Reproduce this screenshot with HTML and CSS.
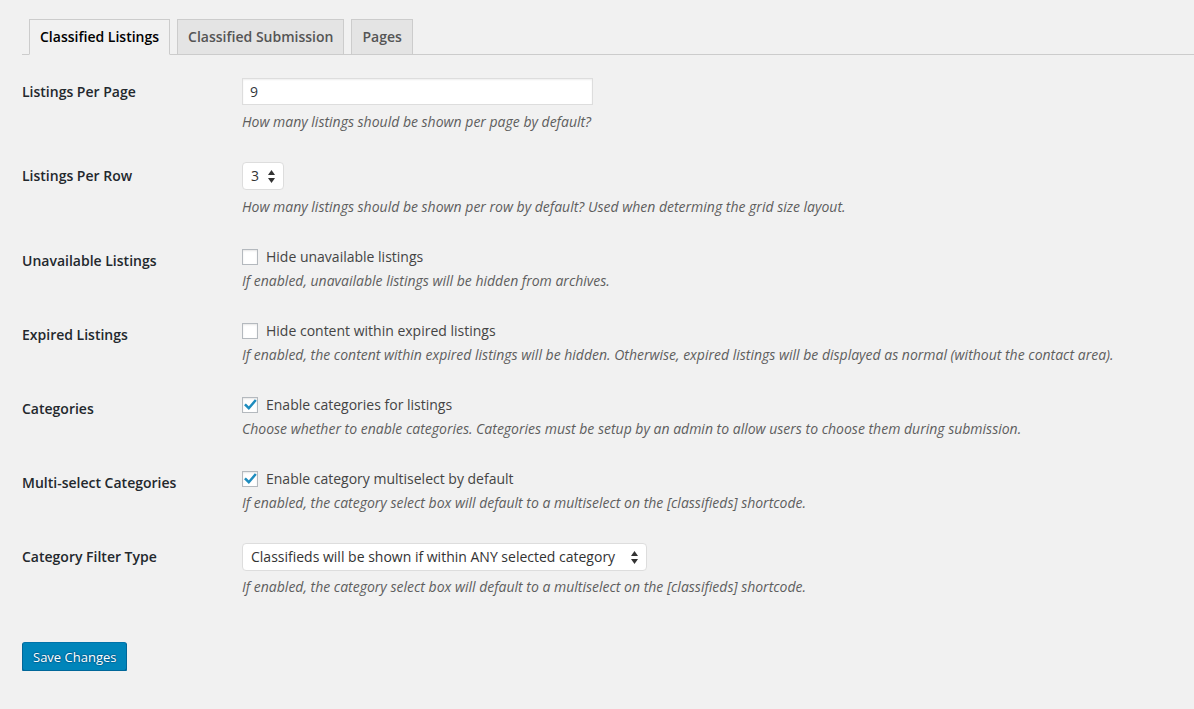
FILE: index.html
```html
<!DOCTYPE html>
<html>
<head>
<meta charset="utf-8">
<link rel="stylesheet" href="styles.css">
</head>
<body>
<div class="wrap">
  <nav class="nav-tab-wrapper">
    <a class="nav-tab nav-tab-active">Classified Listings</a>
    <a class="nav-tab">Classified Submission</a>
    <a class="nav-tab">Pages</a>
  </nav>
  <table class="form-table">
    <tbody>
      <tr>
        <th>Listings Per Page</th>
        <td>
          <div class="text-input">9</div>
          <p class="description">How many listings should be shown per page by default?</p>
        </td>
      </tr>
      <tr>
        <th>Listings Per Row</th>
        <td>
          <div class="select select-small"><span>3</span><svg class="arrows" width="7" height="13" viewBox="0 0 7 13"><polygon points="0,5 3.5,0 7,5" fill="#333"/><polygon points="0,8 3.5,13 7,8" fill="#333"/></svg></div>
          <p class="description">How many listings should be shown per row by default? Used when determing the grid size layout.</p>
        </td>
      </tr>
      <tr>
        <th>Unavailable Listings</th>
        <td>
          <div class="check-line"><span class="checkbox"></span><span>Hide unavailable listings</span></div>
          <p class="description">If enabled, unavailable listings will be hidden from archives.</p>
        </td>
      </tr>
      <tr>
        <th>Expired Listings</th>
        <td>
          <div class="check-line"><span class="checkbox"></span><span>Hide content within expired listings</span></div>
          <p class="description">If enabled, the content within expired listings will be hidden. Otherwise, expired listings will be displayed as normal (without the contact area).</p>
        </td>
      </tr>
      <tr>
        <th>Categories</th>
        <td>
          <div class="check-line"><span class="checkbox"><svg width="14" height="14" viewBox="0 0 14 14"><path d="M2.8 7.2 L5.8 10.2 L12 2.9" fill="none" stroke="#1e8cbe" stroke-width="2.5" stroke-linecap="square"/></svg></span><span>Enable categories for listings</span></div>
          <p class="description">Choose whether to enable categories. Categories must be setup by an admin to allow users to choose them during submission.</p>
        </td>
      </tr>
      <tr>
        <th>Multi-select Categories</th>
        <td>
          <div class="check-line"><span class="checkbox"><svg width="14" height="14" viewBox="0 0 14 14"><path d="M2.8 7.2 L5.8 10.2 L12 2.9" fill="none" stroke="#1e8cbe" stroke-width="2.5" stroke-linecap="square"/></svg></span><span>Enable category multiselect by default</span></div>
          <p class="description">If enabled, the category select box will default to a multiselect on the [classifieds] shortcode.</p>
        </td>
      </tr>
      <tr>
        <th>Category Filter Type</th>
        <td>
          <div class="select select-wide"><span>Classifieds will be shown if within ANY selected category</span><svg class="arrows" width="7" height="13" viewBox="0 0 7 13"><polygon points="0,5 3.5,0 7,5" fill="#333"/><polygon points="0,8 3.5,13 7,8" fill="#333"/></svg></div>
          <p class="description">If enabled, the category select box will default to a multiselect on the [classifieds] shortcode.</p>
        </td>
      </tr>
    </tbody>
  </table>
  <p class="submit"><button class="button-primary">Save Changes</button></p>
</div>
</body>
</html>
```

FILE: styles.css
```css
html, body {
  margin: 0;
  padding: 0;
  background: #f1f1f1;
}
body {
  font-family: "Open Sans", "Liberation Sans", sans-serif;
  font-size: 13px;
  color: #444;
}
.wrap {
  margin-left: 22px;
}
.nav-tab-wrapper {
  display: flex;
  align-items: flex-end;
  padding-top: 19px;
  border-bottom: 1px solid #ccc;
}
.nav-tab {
  display: block;
  margin-left: 7px;
  margin-bottom: -1px;
  padding: 5px 10px;
  font-size: 14px;
  line-height: 24px;
  font-weight: 600;
  color: #555;
  background: #e4e4e4;
  border: 1px solid #ccc;
  white-space: nowrap;
}
.nav-tab-active {
  color: #000;
  background: #f1f1f1;
  border-bottom-color: #f1f1f1;
}
.form-table {
  margin-top: 8px;
  border-collapse: collapse;
  width: 100%;
}
.form-table th {
  width: 200px;
  padding: 20px 10px 20px 0;
  text-align: left;
  vertical-align: top;
  font-size: 14px;
  line-height: 1.3;
  font-weight: 600;
  color: #23282d;
}
.form-table td {
  padding: 15px 10px;
  vertical-align: top;
  font-size: 14px;
  line-height: 1.3;
}
.description {
  margin: 3px 0 0;
  font-size: 14px;
  line-height: 21px;
  font-style: italic;
  color: #5e5e5e;
}
.text-input {
  box-sizing: border-box;
  margin: 0 1px 6px 0;
  width: 351px;
  height: 27px;
  padding: 0 7px;
  line-height: 25px;
  background: #fff;
  border: 1px solid #ddd;
  box-shadow: inset 0 1px 2px rgba(0,0,0,.07);
  color: #32373c;
  font-size: 14px;
}
.select {
  box-sizing: border-box;
  position: relative;
  display: flex;
  align-items: center;
  margin: 0 0 5px;
  height: 28px;
  padding: 0 8px;
  background: #fff;
  border: 1px solid #ddd;
  border-radius: 4px;
  color: #333;
  font-size: 14px;
}
.select-small {
  width: 42px;
  margin-bottom: 6px;
}
.select-wide {
  width: 405px;
}
.select .arrows {
  position: absolute;
  right: 8px;
  top: 7px;
}
.check-line {
  display: flex;
  align-items: center;
  height: 20px;
  color: #444;
}
.checkbox {
  box-sizing: border-box;
  position: relative;
  width: 16px;
  height: 16px;
  margin: 0 8px 0 0;
  background: #fff;
  border: 1px solid #b4b9be;
  box-shadow: inset 0 1px 2px rgba(0,0,0,.1);
  flex: none;
}
.checkbox svg {
  position: absolute;
  left: 0;
  top: 0;
}
.submit {
  margin: 20px 0 0;
  padding-top: 10px;
}
.button-primary {
  box-sizing: border-box;
  height: 29px;
  padding: 0 10px;
  font-family: "Open Sans", "Liberation Sans", sans-serif;
  font-size: 13px;
  line-height: 26px;
  color: #fff;
  background: #0085ba;
  border: 1px solid;
  border-color: #0073aa #006799 #006799;
  border-radius: 3px;
  box-shadow: 0 1px 0 #006799;
  text-shadow: 0 -1px 1px #006799, 1px 0 1px #006799, 0 1px 1px #006799, -1px 0 1px #006799;
}
```
